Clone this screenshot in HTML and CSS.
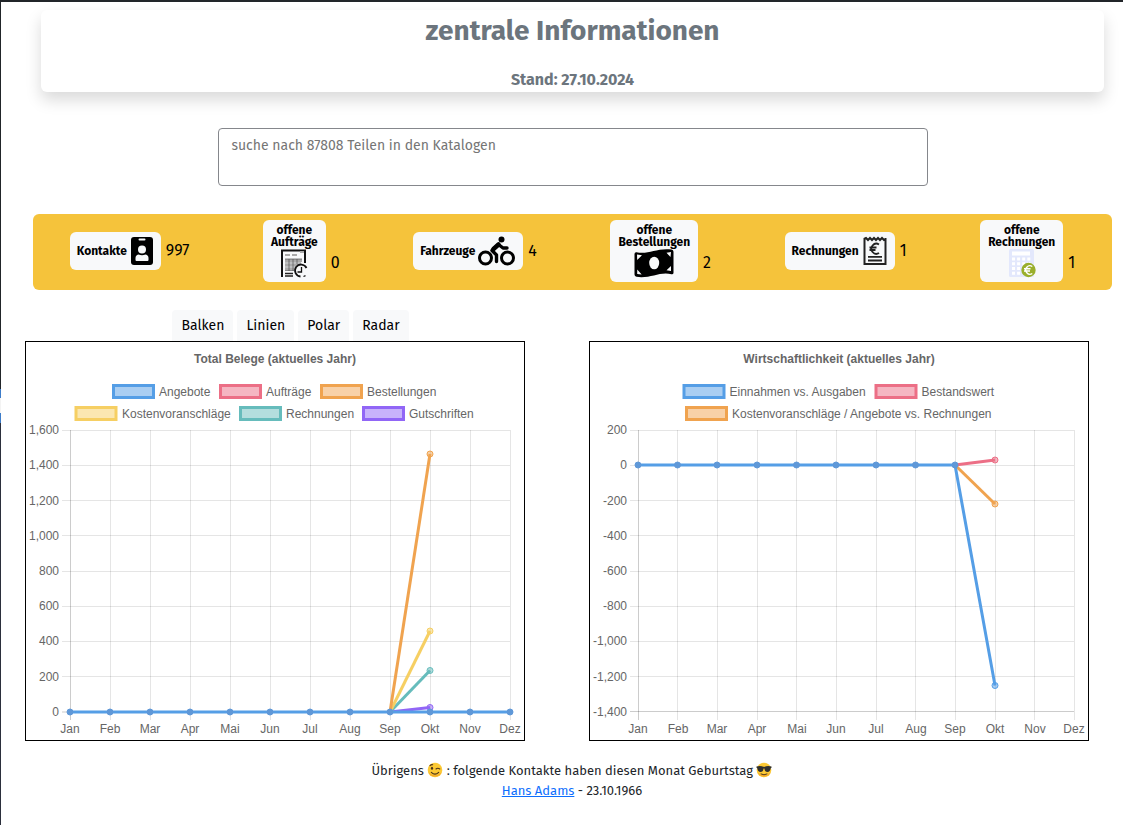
FILE: index.html
```
<!DOCTYPE html>
<html lang="de">
<head>
<meta charset="utf-8">
<meta name="viewport" content="width=device-width, initial-scale=1">
<title>zentrale Informationen</title>
<link rel="stylesheet" href="styles.css">
</head>
<body>
<div class="app">
<div class="edge"></div>
<main class="page">
  <header class="head-card">
    <h1>zentrale Informationen</h1>
    <p class="date">Stand: 27.10.2024</p>
  </header>

  <textarea class="search" aria-label="Teilesuche" placeholder="suche nach 87808 Teilen in den Katalogen"></textarea>

  <section class="stats">
    <div class="stat">
      <button class="tile wide" type="button"><span>Kontakte</span>
        <svg class="ico" width="24" height="30" viewBox="0 0 24 30"><rect x="1" y="1" width="22" height="28" rx="3"/><rect x="8.500" y="2.500" width="7" height="2" rx="1" fill="#f8f9fa"/><circle cx="12" cy="13.500" r="4" fill="#f8f9fa"/><path d="M5.500 24v-2q0-3 3-3.500 3.500 1.500 7 0 3 .5 3 3.500v2q0 1-1 1h-11q-1 0-1-1z" fill="#f8f9fa"/></svg>
      </button>
      <span class="count">997</span>
    </div>
    <div class="stat tall">
      <button class="tile stack" type="button"><span>offene<br>Aufträge</span>
        <svg class="ico" width="30" height="30" viewBox="0 0 30 30"><path d="M3 29V2.500h23V15" fill="none" stroke="#111" stroke-width="2"/><path d="M6 6h5v2H6zM13 6h5v2h-5zM21 3h4v2h-4z" fill="#aaa"/><path d="M6 11h17v3H6zM6 16h14v2H6zM6 20h10v2H6z" fill="#aaa"/><path d="M6 11h17M6 15h16M6 19h11M6 22.500h9M10 11v12M14 11v12M18 11v5" stroke="#555" stroke-width=".7"/><path d="M6 25.500h8M6 28h8" stroke="#222" stroke-width="1.500"/><circle cx="22" cy="23" r="7" fill="#f8f9fa"/><path d="M27.500 20a6 6 0 1 0-6 8.500" fill="none" stroke="#111" stroke-width="1.800"/><path d="M22.500 19v5h-4M24.500 28.500l2-.8" fill="none" stroke="#111" stroke-width="1.300"/></svg>
      </button>
      <span class="count">0</span>
    </div>
    <div class="stat">
      <button class="tile wide" type="button"><span>Fahrzeuge</span>
        <svg class="ico" width="38" height="30" viewBox="0 0 38 30"><g fill="none" stroke="#000"><circle cx="7.500" cy="22" r="6" stroke-width="3"/><circle cx="29.500" cy="22" r="6" stroke-width="3"/><path d="M18.500 25.500v-6.500l-4.500-4.500 6.500-6 4.500 3.500h4" stroke-width="3.400" stroke-linejoin="round" stroke-linecap="round"/><path d="M15.500 13l5-4.500" stroke-width="4.500" stroke-linecap="round"/></g><circle cx="23.500" cy="3.500" r="3"/></svg>
      </button>
      <span class="count">4</span>
    </div>
    <div class="stat tall">
      <button class="tile stack" type="button"><span>offene<br>Bestellungen</span>
        <svg class="ico" width="42" height="30" viewBox="0 0 42 30"><path d="M1.500 6q0-2 2-1.800C15 7 24-.5 38.500 1.500q2 .3 2 2.200v21q0 1.700-2 1.500C27 23 17 31 3.500 28.800q-2-.3-2-2.300z"/><ellipse cx="21.200" cy="15" rx="5" ry="6.300" fill="#f8f9fa"/><path d="M4 6.500l5 .7-4.800 4.800zM38 4l-4.500.8 4 4.300zM4.200 26v-4.500l4.500 5zM38 18v5l-4.500-.8z" fill="#f8f9fa"/></svg>
      </button>
      <span class="count">2</span>
    </div>
    <div class="stat">
      <button class="tile wide" type="button"><span>Rechnungen</span>
        <svg class="ico" width="26" height="30" viewBox="0 0 26 30"><path d="M2.500 2v26h21V2M2 3l2-1 2 2 2-2 2 2 2-2 2 2 2-2 2 2 2-2 2 2 2-1" fill="none" stroke="#222" stroke-width="2"/><path d="M17 8.500a5 5 0 1 0 0 8.500M7.500 11.500h7M7.500 14h6" fill="none" stroke="#222" stroke-width="1.900"/><path d="M6 20.800h14M6 24.500h14" stroke="#222" stroke-width="1.800"/></svg>
      </button>
      <span class="count">1</span>
    </div>
    <div class="stat tall">
      <button class="tile stack" type="button"><span>offene<br>Rechnungen</span>
        <svg class="ico" width="30" height="30" viewBox="0 0 30 30"><rect x="2" y="1" width="25" height="28" rx="1.500" fill="#e3e8fc"/><rect x="5" y="3.500" width="18" height="4" fill="#fff"/><path d="M5 11h19M5 15.800h19M5 20.500h10M5 25.300h10" stroke="#fff" stroke-width="3" stroke-dasharray="3 2.100"/><circle cx="21.500" cy="22" r="7.200" fill="#9aaf2b"/><path d="M25.300 18.500a4.200 4.200 0 1 0 0 7M17 20.800h6.500M17 23h6" fill="none" stroke="#fff" stroke-width="1.400"/></svg>
      </button>
      <span class="count">1</span>
    </div>
  </section>

  <section class="charts">
    <nav class="tabs">
      <button type="button">Balken</button>
      <button type="button">Linien</button>
      <button type="button">Polar</button>
      <button type="button">Radar</button>
    </nav>

    <svg class="chart left" viewBox="0 0 498 398" role="img" aria-label="Total Belege">
      <text class="title" x="249" y="21">Total Belege (aktuelles Jahr)</text>
      <g class="legend">
        <rect class="blue" x="87.500" y="43.500" width="40" height="12"/><text x="133" y="54">Angebote</text>
        <rect class="red" x="194.500" y="43.500" width="40" height="12"/><text x="240" y="54">Aufträge</text>
        <rect class="orange" x="295.500" y="43.500" width="40" height="12"/><text x="341" y="54">Bestellungen</text>
        <rect class="yellow" x="50" y="65.500" width="40" height="12"/><text x="96" y="76">Kostenvoranschläge</text>
        <rect class="teal" x="214.500" y="65.500" width="40" height="12"/><text x="260" y="76">Rechnungen</text>
        <rect class="violet" x="337.500" y="65.500" width="40" height="12"/><text x="383" y="76">Gutschriften</text>
      </g>
      <path class="grid" d="M36 88.500H484M36 123.500H484M36 158.500H484M36 193.500H484M36 229.500H484M36 264.500H484M36 299.500H484M36 334.500H484M84.500 88V378M124.500 88V378M164.500 88V378M204.500 88V378M244.500 88V378M284.500 88V378M324.500 88V378M364.500 88V378M404.500 88V378M444.500 88V378M484.500 88V378"/>
      <path class="axis" d="M36 370H484M44.500 88V378"/>
      <g class="ylab">
        <text x="33" y="92">1,600</text><text x="33" y="127">1,400</text><text x="33" y="163">1,200</text><text x="33" y="198">1,000</text><text x="33" y="233">800</text><text x="33" y="268">600</text><text x="33" y="303">400</text><text x="33" y="339">200</text><text x="33" y="374">0</text>
      </g>
      <g class="xlab">
        <text x="44" y="391">Jan</text><text x="84" y="391">Feb</text><text x="124" y="391">Mar</text><text x="164" y="391">Apr</text><text x="204" y="391">Mai</text><text x="244" y="391">Jun</text><text x="284" y="391">Jul</text><text x="324" y="391">Aug</text><text x="364" y="391">Sep</text><text x="404" y="391">Okt</text><text x="444" y="391">Nov</text><text x="484" y="391">Dez</text>
      </g>
      <g class="line violet"><path d="M364 370L404 365.500"/><circle cx="404" cy="365.500" r="3"/></g>
      <g class="line teal"><path d="M364 370L404 328.500"/><circle cx="404" cy="328.500" r="3"/></g>
      <g class="line yellow"><path d="M364 370L404 289"/><circle cx="404" cy="289" r="3"/></g>
      <g class="line orange"><path d="M364 370L404 112"/><circle cx="404" cy="112" r="3"/></g>
      <g class="line blue solid"><path d="M44 370H484"/><circle cx="44" cy="370" r="3"/><circle cx="84" cy="370" r="3"/><circle cx="124" cy="370" r="3"/><circle cx="164" cy="370" r="3"/><circle cx="204" cy="370" r="3"/><circle cx="244" cy="370" r="3"/><circle cx="284" cy="370" r="3"/><circle cx="324" cy="370" r="3"/><circle cx="364" cy="370" r="3"/><circle cx="404" cy="370" r="3"/><circle cx="444" cy="370" r="3"/><circle cx="484" cy="370" r="3"/></g>
    </svg>

    <svg class="chart right" viewBox="0 0 498 398" role="img" aria-label="Wirtschaftlichkeit">
      <text class="title" x="249" y="21">Wirtschaftlichkeit (aktuelles Jahr)</text>
      <g class="legend">
        <rect class="blue" x="94" y="43.500" width="40" height="12"/><text x="139.500" y="54">Einnahmen vs. Ausgaben</text>
        <rect class="red" x="286" y="43.500" width="40" height="12"/><text x="331.500" y="54">Bestandswert</text>
        <rect class="orange" x="96.500" y="65.500" width="40" height="12"/><text x="142" y="76">Kostenvoranschläge / Angebote vs. Rechnungen</text>
      </g>
      <path class="grid" d="M40 88.500H484M40 123.500H484M40 158.500H484M40 193.500H484M40 229.500H484M40 264.500H484M40 299.500H484M40 334.500H484M87.500 88V378M127.500 88V378M167.500 88V378M206.500 88V378M246.500 88V378M286.500 88V378M325.500 88V378M365.500 88V378M405.500 88V378M444.500 88V378M484.500 88V378"/>
      <path class="axis" d="M40 369.500H484M48.500 88V378"/>
      <g class="ylab">
        <text x="37" y="92">200</text><text x="37" y="127">0</text><text x="37" y="163">-200</text><text x="37" y="198">-400</text><text x="37" y="233">-600</text><text x="37" y="268">-800</text><text x="37" y="303">-1,000</text><text x="37" y="339">-1,200</text><text x="37" y="374">-1,400</text>
      </g>
      <g class="xlab">
        <text x="48" y="391">Jan</text><text x="88" y="391">Feb</text><text x="127" y="391">Mar</text><text x="167" y="391">Apr</text><text x="207" y="391">Mai</text><text x="246" y="391">Jun</text><text x="286" y="391">Jul</text><text x="326" y="391">Aug</text><text x="365" y="391">Sep</text><text x="405" y="391">Okt</text><text x="445" y="391">Nov</text><text x="484" y="391">Dez</text>
      </g>
      <g class="line orange"><path d="M365 123L405 162"/><circle cx="405" cy="162" r="3"/></g>
      <g class="line red"><path d="M365 123L405 118"/><circle cx="405" cy="118" r="3"/></g>
      <g class="line blue"><path d="M48 123H365L405 343.500"/><circle cx="405" cy="343.500" r="3"/></g>
      <g class="line blue solid"><circle cx="48" cy="123" r="3"/><circle cx="87.500" cy="123" r="3"/><circle cx="127" cy="123" r="3"/><circle cx="167" cy="123" r="3"/><circle cx="206.500" cy="123" r="3"/><circle cx="246" cy="123" r="3"/><circle cx="286" cy="123" r="3"/><circle cx="325.500" cy="123" r="3"/><circle cx="365" cy="123" r="3"/></g>
    </svg>
  </section>

  <footer class="birthdays">
    <p>Übrigens
      <svg class="emoji" width="16" height="16" viewBox="0 0 16 16" role="img" aria-label="zwinkernd"><circle cx="8" cy="8" r="7.300" fill="#fcc934"/><path d="M1.500 10.500a7.300 7.300 0 0 0 13 0Q8 16 1.500 10.500z" fill="#f4a72c"/><ellipse cx="5" cy="6.300" rx="1.100" ry="1.500" fill="#4b331c"/><path d="M9 7q1.800-1.500 3.800 0M3 3.700q1.200-1.300 2.700-1M4.300 10.300q3.700 3.600 7.400 0" fill="none" stroke="#4b331c" stroke-width="1.100" stroke-linecap="round"/></svg>
      : folgende Kontakte haben diesen Monat Geburtstag
      <svg class="emoji" width="16" height="16" viewBox="0 0 16 16" role="img" aria-label="Sonnenbrille"><circle cx="8" cy="8" r="7.300" fill="#fcc934"/><path d="M1.500 10.500a7.300 7.300 0 0 0 13 0Q8 16 1.500 10.500z" fill="#f4a72c"/><path d="M.5 4.500Q4.500 3.500 8 5q3.500-1.500 7.500-.5v1.200l-.8.6q-.5 3.700-3.200 3.700T8.400 6.500h-.8Q7.200 10 4.500 10T1.300 6.300l-.8-.6z" fill="#2f2f2f"/><path d="M5 12q3 1.800 6 0" fill="none" stroke="#4b331c" stroke-linecap="round"/></svg>
    </p>
    <p><a href="#">Hans Adams</a> - 23.10.1966</p>
  </footer>
</main>
</div>
</body>
</html>
```
FILE: styles.css
```
* { box-sizing: border-box; }

body {
  margin: 0;
  background: #fff;
  color: #212529;
  font: 14px/20px "Fira Sans", Roboto, "Noto Sans", sans-serif;
}

h1, p { margin: 0; }
button, textarea { font: inherit; color: #000; }

.app {
  display: flex;
  min-height: 100vh;
  border-top: 2px solid #212529;
}

.edge {
  flex: 0 0 1px;
  background: linear-gradient(#212529 387px, #3d7cc9 387px 396px, #f3f3f3 396px 411px, #3d7cc9 411px 421px, #2b2f3c 421px);
}

.page { flex: 1; min-width: 0; }

.head-card {
  margin: 8px 19px 0 40px;
  min-height: 82px;
  display: flex;
  flex-direction: column;
  justify-content: space-between;
  border-radius: 6px;
  box-shadow: 0 8px 16px rgba(0, 0, 0, .15);
  text-align: center;
  font-weight: 700;
  color: #6c757d;
}
.head-card h1 { font-size: 28px; line-height: 42px; }
.head-card .date { font-size: 16px; line-height: 24px; }

.search {
  display: block;
  width: 63.2%;
  height: 58px;
  margin: 36px 0 0 calc(18.4% + 11px);
  padding: 6px 12px;
  border: 1px solid #85878c;
  border-radius: 4px;
  background: #fff;
  line-height: 21px;
  resize: none;
}
.search::placeholder { color: #757575; opacity: 1; }

.stats {
  display: flex;
  justify-content: space-around;
  align-items: center;
  margin: 28px 11px 0 32px;
  min-height: 76px;
  padding-bottom: 2px;
  border-radius: 6px;
  background: #f5c33b;
}
.stat { display: flex; align-items: center; gap: 5px; }
.count { color: #000; font-size: 16px; line-height: 24px; }
.stat.tall .count { padding-top: 24px; }

.tile {
  display: flex;
  align-items: center;
  justify-content: center;
  border: 0;
  border-radius: 6px;
  background: #f8f9fa;
  font-size: 12px;
  font-weight: 700;
  line-height: 12px;
}
.wide { height: 38px; padding: 0 7px; gap: 3px; }
.stack { flex-direction: column; min-height: 62px; padding: 3px 8px 4px; }
.ico { display: block; }

.charts {
  display: grid;
  grid-template-columns: 1fr 1fr;
  column-gap: 33px;
  margin: 20px 3px 0 24px;
}
.tabs { display: flex; justify-content: center; gap: 4px; grid-column: 1; }
.tabs button {
  height: 31px;
  padding: 0 9px;
  border: 0;
  border-radius: 4px 4px 0 0;
  background: #f8f9fa;
}

.chart {
  width: 100%;
  max-width: 500px;
  border: 1px solid #000;
  font-family: "Liberation Sans", Arial, sans-serif;
  font-size: 12px;
}
.left { grid-area: 2 / 1; }
.right { grid-area: 2 / 2; }
.chart text { fill: #666; }
.title { font-weight: 700; text-anchor: middle; }
.ylab { text-anchor: end; }
.xlab { text-anchor: middle; }
.grid { fill: none; stroke: rgba(0, 0, 0, .1); }
.axis { fill: none; stroke: rgba(0, 0, 0, .2); }

.blue { --c: #559ee6; --f: #aacef2; }
.red { --c: #ec6f86; --f: #f5b6c2; }
.orange { --c: #f0a34f; --f: #f8d1a8; }
.yellow { --c: #f6cf63; --f: #fbe7b1; }
.teal { --c: #66bcbc; --f: #b4dede; }
.violet { --c: #9166f6; --f: #c8b3fb; }
.legend rect { fill: var(--f); stroke: var(--c); stroke-width: 3; }
.line path { fill: none; stroke: var(--c); stroke-width: 3; }
.line circle { fill: var(--c); fill-opacity: .5; stroke: var(--c); }
.line.solid circle { fill: #5f98d8; fill-opacity: 1; stroke: #5f98d8; }

.birthdays {
  margin: 20px 0 0 20px;
  text-align: center;
  font-size: 13px;
}
.emoji { vertical-align: -3px; }
a { color: #0d6efd; }
```
